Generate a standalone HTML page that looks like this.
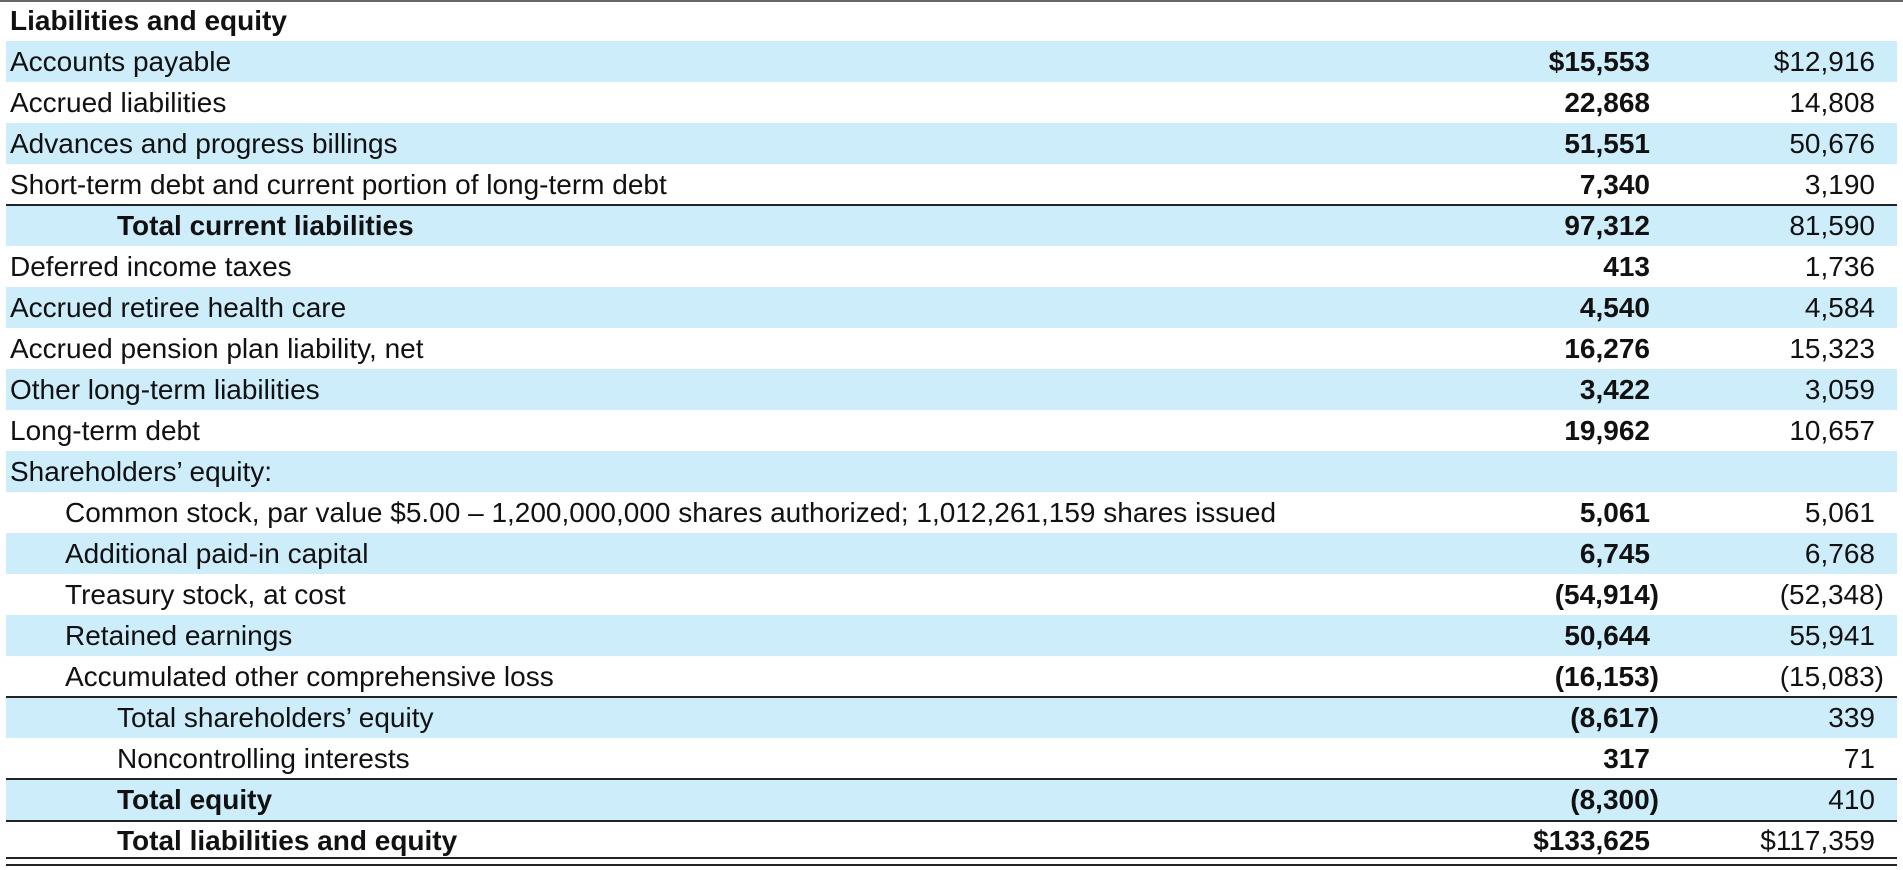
<!DOCTYPE html>
<html><head><meta charset="utf-8"><style>
html,body{margin:0;padding:0;background:#fff;width:1903px;height:870px;overflow:hidden}
body{font-family:"Liberation Sans",Arial,sans-serif;font-size:28px;color:#111;position:relative}
.r{position:absolute;left:6px;width:1891px;height:41px}
.b{background:#cdedfb}
.t{position:absolute;top:5px;white-space:nowrap;line-height:32px}
.n1{position:absolute;right:247px;top:5px;font-weight:bold;line-height:32px}
.n2{position:absolute;right:22px;top:5px;line-height:32px}
.p{margin-right:-9px}
.ln{position:absolute;left:6px;width:1891px;height:2px;background:#222}
</style></head><body>
<div style="position:absolute;left:0;top:0;width:1903px;height:2px;background:#666"></div>

<div class="r" style="top:0"><span class="t" style="left:4px;font-weight:bold">Liabilities and equity</span></div>
<div class="r b" style="top:41px"><span class="t" style="left:4px">Accounts payable</span><span class="n1">$15,553</span><span class="n2">$12,916</span></div>
<div class="r" style="top:82px"><span class="t" style="left:4px">Accrued liabilities</span><span class="n1">22,868</span><span class="n2">14,808</span></div>
<div class="r b" style="top:123px"><span class="t" style="left:4px">Advances and progress billings</span><span class="n1">51,551</span><span class="n2">50,676</span></div>
<div class="r" style="top:164px"><span class="t" style="left:4px">Short-term debt and current portion of long-term debt</span><span class="n1">7,340</span><span class="n2">3,190</span></div>
<div class="r b" style="top:205px"><span class="t" style="left:111px;font-weight:bold">Total current liabilities</span><span class="n1">97,312</span><span class="n2">81,590</span></div>
<div class="r" style="top:246px"><span class="t" style="left:4px">Deferred income taxes</span><span class="n1">413</span><span class="n2">1,736</span></div>
<div class="r b" style="top:287px"><span class="t" style="left:4px">Accrued retiree health care</span><span class="n1">4,540</span><span class="n2">4,584</span></div>
<div class="r" style="top:328px"><span class="t" style="left:4px">Accrued pension plan liability, net</span><span class="n1">16,276</span><span class="n2">15,323</span></div>
<div class="r b" style="top:369px"><span class="t" style="left:4px">Other long-term liabilities</span><span class="n1">3,422</span><span class="n2">3,059</span></div>
<div class="r" style="top:410px"><span class="t" style="left:4px">Long-term debt</span><span class="n1">19,962</span><span class="n2">10,657</span></div>
<div class="r b" style="top:451px"><span class="t" style="left:4px">Shareholders’ equity:</span></div>
<div class="r" style="top:492px"><span class="t" style="left:59px">Common stock, par value $5.00 – 1,200,000,000 shares authorized; 1,012,261,159 shares issued</span><span class="n1">5,061</span><span class="n2">5,061</span></div>
<div class="r b" style="top:533px"><span class="t" style="left:59px">Additional paid-in capital</span><span class="n1">6,745</span><span class="n2">6,768</span></div>
<div class="r" style="top:574px"><span class="t" style="left:59px">Treasury stock, at cost</span><span class="n1 p">(54,914)</span><span class="n2 p">(52,348)</span></div>
<div class="r b" style="top:615px"><span class="t" style="left:59px">Retained earnings</span><span class="n1">50,644</span><span class="n2">55,941</span></div>
<div class="r" style="top:656px"><span class="t" style="left:59px">Accumulated other comprehensive loss</span><span class="n1 p">(16,153)</span><span class="n2 p">(15,083)</span></div>
<div class="r b" style="top:697px"><span class="t" style="left:111px">Total shareholders’ equity</span><span class="n1 p">(8,617)</span><span class="n2">339</span></div>
<div class="r" style="top:738px"><span class="t" style="left:111px">Noncontrolling interests</span><span class="n1">317</span><span class="n2">71</span></div>
<div class="r b" style="top:779px"><span class="t" style="left:111px;font-weight:bold">Total equity</span><span class="n1 p">(8,300)</span><span class="n2">410</span></div>
<div class="r" style="top:820px"><span class="t" style="left:111px;font-weight:bold">Total liabilities and equity</span><span class="n1">$133,625</span><span class="n2">$117,359</span></div>

<div class="ln" style="top:204px"></div>
<div class="ln" style="top:696px"></div>
<div class="ln" style="top:778px"></div>
<div class="ln" style="top:820px"></div>
<div class="ln" style="top:857px"></div>
<div class="ln" style="top:864px"></div>
</body></html>
